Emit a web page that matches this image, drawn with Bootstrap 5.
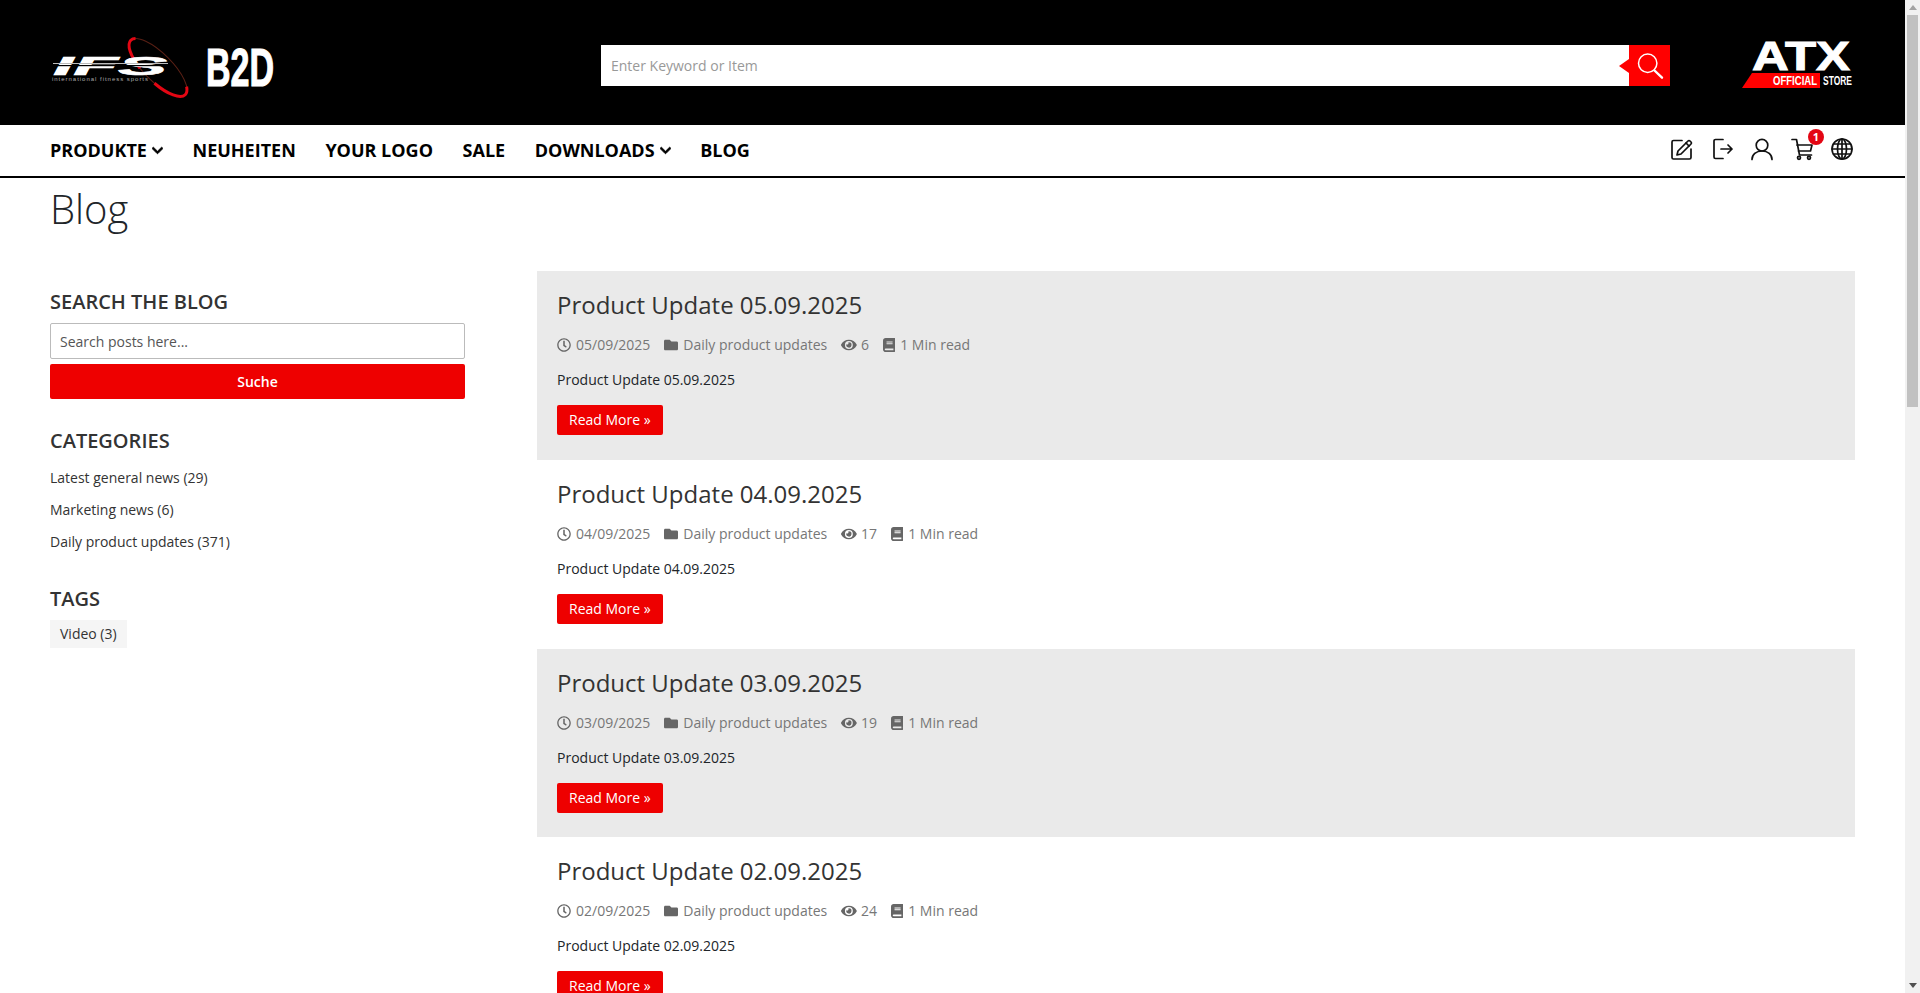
<!DOCTYPE html>
<html lang="de">
<head>
<meta charset="utf-8">
<title>Blog</title>
<link href="https://cdn.jsdelivr.net/npm/bootstrap@5.3.0/dist/css/bootstrap.min.css" rel="stylesheet">
<style>
body{font-family:"Open Sans","Noto Sans",sans-serif;font-size:14px;color:#212529;background:#fff;margin-right:15px}
.fake-bar{position:fixed;top:0;right:0;bottom:0;width:15px;background:#f1f1f1;z-index:10;padding:5px 2px;gap:5px}
.bar-up{width:0;height:0;border-style:solid;border-width:0 4px 5px;border-color:transparent transparent #a3a3a3;align-self:center;flex:none}
.bar-thumb{height:392px;background:#c1c1c1;flex:none}
.bar-down{width:0;height:0;border-style:solid;border-width:5px 4px 0;border-color:#505050 transparent transparent;align-self:center;margin-top:auto;flex:none}
.hdr-top{background:#000;height:125px;padding:0 50px}
.logo-ifs{width:224px;height:76px;flex:none}
.srch{width:1069px;height:41px;margin-left:327px;margin-top:6px;background:#fff}
.srch input{flex:1;border:0;outline:0;height:41px;padding:0 10px;font-size:14px;font-family:inherit;min-width:0}
.srch input::placeholder{color:#999}
.srch-btn{width:41px;height:41px;background:#f00;border:0;padding:0;position:relative;flex:none}
.srch-btn::before{content:"";position:absolute;left:-10px;top:13.5px;border-style:solid;border-width:7px 10px 7px 0;border-color:transparent #f00 transparent transparent}
.srch-btn svg{display:block}
.logo-atx{width:113px;height:51px;margin-left:auto;margin-right:2px;flex:none}
.hdr-nav{height:53px;border-bottom:2px solid #000;padding:0 50px}
.hdr-link{font-size:18px;font-weight:700;color:#000;text-decoration:none;text-transform:uppercase;display:flex;align-items:center;gap:5px}
.hdr-links{gap:29.6px}
.hdr-icons{gap:18px;margin-left:auto;margin-right:2px;padding-bottom:3px}
.ico{width:22px;height:22px;display:block;fill:none;stroke:#111;stroke-width:1.7;stroke-linecap:round;stroke-linejoin:round;overflow:visible}
.ico-wrap{position:relative;display:block}
.cart-badge{position:absolute;top:-9px;left:17px;width:16px;height:16px;border-radius:50%;background:#e30613;color:#fff;font-size:11px;font-weight:700;line-height:16px;text-align:center}
.page-ttl{font-size:40px;font-weight:300;line-height:48px;color:#212529;margin:7px 0 0;padding:0 50px}
.blog-wrap{padding:0 50px;margin-top:38px;gap:72px}
.side{width:415px;flex:none;padding-top:17px}
.side-h{font-size:20px;font-weight:600;color:#333;text-transform:uppercase;line-height:27px;margin:0 0 8px}
.categ-h{margin-top:28px}
.tags-h{margin-top:27px;margin-bottom:8px}
.side-input{height:36px;border-radius:2px;border:1px solid #bbb;font-size:14px;padding:0 9px;color:#555}
.side-input::placeholder{color:#555}
.side-btn{height:35px;width:100%;background:#e00;border:0;border-radius:2px;color:#fff;font-weight:600;font-size:14px;margin-top:5px;padding:0;display:block}
.side-list{list-style:none;padding:0;margin:0}
.side-list li{line-height:32px;font-size:14px;color:#333}
.tag-chip{display:inline-block;background:#f5f5f5;color:#333;font-size:14px;height:28px;line-height:28px;padding:0 10px}
.main-col{flex:1;min-width:0}
.post{padding:18px 20px 0;height:188.8px}
.post-alt{background:#eaeaea}
.post-ttl{font-size:24px;font-weight:400;line-height:32px;color:#333;margin:0 0 14px}
.post-meta{font-size:14px;color:#777;line-height:20px;gap:14px;margin-bottom:15px}
.post-meta span{display:flex;align-items:center;gap:5px}
.post-meta span:nth-child(3){gap:4px}
.post-meta svg{height:14px;fill:#666;display:block}
.post-txt{line-height:20px;color:#212529;margin:0 0 15px}
.post-btn{background:#e00;color:#fff;border:0;border-radius:2px;height:30px;line-height:30px;padding:0 12px;font-size:14px;display:inline-block;text-decoration:none}
</style>
</head>
<body>
<div class="fake-bar d-flex flex-column" aria-hidden="true"><span class="bar-up"></span><span class="bar-thumb"></span><span class="bar-down"></span></div>
<header>
<div class="hdr-top d-flex align-items-center">
<svg class="logo-ifs" viewBox="50 25 224 76">
<g transform="rotate(45 158 67.500)">
<ellipse cx="158" cy="67.500" rx="38.500" ry="14" fill="none" stroke="#5a2015" stroke-width="1"/>
<ellipse cx="158" cy="67.500" rx="38.500" ry="14" fill="none" stroke="#e30613" stroke-width="3" pathLength="100" stroke-dasharray="25 12 21 42" stroke-dashoffset="5"/>
</g>
<text x="53" y="75" font-family="Liberation Sans" font-weight="700" font-style="italic" font-size="25" fill="#fff" stroke="#fff" stroke-width=".6" textLength="114" lengthAdjust="spacingAndGlyphs">IFS</text>
<rect x="53" y="63" width="115" height="1" fill="#bbb"/>
<rect x="56" y="65" width="110" height="1.2" fill="#000"/>
<text x="52" y="81" font-family="Liberation Sans" font-size="6" fill="#aaa" textLength="96" lengthAdjust="spacing">international fitness sports</text>
<text x="206" y="85.500" font-family="Liberation Sans" font-weight="700" font-size="53" fill="#fff" stroke="#fff" stroke-width="1.200" textLength="68" lengthAdjust="spacingAndGlyphs">B2D</text>
</svg>
<div class="srch d-flex">
<input type="text" placeholder="Enter Keyword or Item">
<button class="srch-btn" type="button" aria-label="Suche"><svg width="41" height="41" viewBox="0 0 41 41" fill="none" stroke="#fff"><circle cx="18.7" cy="18.3" r="9.2" stroke-width="1.5"/><path d="M25.5 25.5l7.5 7.2" stroke-width="2.4" stroke-linecap="round"/></svg></button>
</div>
<svg class="logo-atx" viewBox="1740 37 113 51">
<text x="1752" y="70" font-family="Liberation Sans" font-weight="700" font-size="40" fill="#fff" stroke="#fff" stroke-width="1" textLength="98" lengthAdjust="spacingAndGlyphs">ATX</text>
<path d="M1752 73H1820V88H1742Z" fill="#f00"/>
<text x="1773" y="85" font-family="Liberation Sans" font-weight="700" font-size="13" fill="#fff" textLength="44" lengthAdjust="spacingAndGlyphs">OFFICIAL</text>
<text x="1823" y="85" font-family="Liberation Sans" font-weight="700" font-size="13" fill="#fff" textLength="29" lengthAdjust="spacingAndGlyphs">STORE</text>
</svg>
</div>
<nav class="hdr-nav d-flex align-items-center">
<div class="hdr-links d-flex">
<a class="hdr-link" href="#">Produkte <svg width="11" height="13" viewBox="0 0 448 512" fill="#000" stroke="#000" stroke-width="30"><path d="M207.029 381.476L12.686 187.132c-9.373-9.373-9.373-24.569 0-33.941l22.667-22.667c9.357-9.357 24.522-9.375 33.901-.04L224 284.505l154.745-154.021c9.379-9.335 24.544-9.317 33.901.04l22.667 22.667c9.373 9.373 9.373 24.569 0 33.941L240.971 381.476c-9.373 9.372-24.569 9.372-33.942 0z"/></svg></a>
<a class="hdr-link" href="#">Neuheiten</a>
<a class="hdr-link" href="#">Your Logo</a>
<a class="hdr-link" href="#">Sale</a>
<a class="hdr-link" href="#">Downloads <svg width="11" height="13" viewBox="0 0 448 512" fill="#000" stroke="#000" stroke-width="30"><path d="M207.029 381.476L12.686 187.132c-9.373-9.373-9.373-24.569 0-33.941l22.667-22.667c9.357-9.357 24.522-9.375 33.901-.04L224 284.505l154.745-154.021c9.379-9.335 24.544-9.317 33.901.04l22.667 22.667c9.373 9.373 9.373 24.569 0 33.941L240.971 381.476c-9.373 9.372-24.569 9.372-33.942 0z"/></svg></a>
<a class="hdr-link" href="#">Blog</a>
</div>
<div class="hdr-icons d-flex align-items-center">
<span class="ico-wrap"><svg class="ico" viewBox="0 0 22 22"><path d="M11 2.5H2.5A1.5 1.5 0 0 0 1 4v15.5A1.5 1.5 0 0 0 2.5 21h16a1.5 1.5 0 0 0 1.5-1.5V11"/><path d="M6 17l1-4L17 3a1.4 1.4 0 0 1 2 0l1 1a1.4 1.4 0 0 1 0 2L10 16z"/><path d="M15 5l3 3"/></svg></span>
<span class="ico-wrap"><svg class="ico" viewBox="0 0 22 22"><path d="M12 1.5H4.500A1.500 1.500 0 0 0 3 3v16a1.500 1.500 0 0 0 1.500 1.500H12"/><path d="M10 11h11M17 7l4 4-4 4"/></svg></span>
<span class="ico-wrap"><svg class="ico" viewBox="0 0 22 22"><circle cx="11" cy="7.2" r="5.8"/><path d="M1 21.500c0-5 4-8.500 10-8.500s10 3.500 10 8.500"/></svg></span>
<span class="ico-wrap"><svg class="ico" viewBox="0 0 22 22"><path d="M1 1.500h4.500l3 15.500h12"/><path d="M6 7h15l-1.500 6H7.500"/><circle cx="8" cy="19.800" r="1.500"/><circle cx="18" cy="19.800" r="1.500"/></svg><span class="cart-badge">1</span></span>
<span class="ico-wrap"><svg class="ico" viewBox="0 0 22 22"><circle cx="11" cy="11" r="10"/><ellipse cx="11" cy="11" rx="4.500" ry="10"/><path d="M11 1v20M1 11h20M2.500 6h17M2.500 16h17"/></svg></span>
</div>
</nav>
</header>
<h1 class="page-ttl">Blog</h1>
<div class="blog-wrap d-flex">
<aside class="side">
<h2 class="side-h">Search the blog</h2>
<input class="form-control side-input" type="text" placeholder="Search posts here...">
<button class="side-btn" type="button">Suche</button>
<h2 class="side-h categ-h">Categories</h2>
<ul class="side-list">
<li>Latest general news (29)</li>
<li>Marketing news (6)</li>
<li>Daily product updates (371)</li>
</ul>
<h2 class="side-h tags-h">Tags</h2>
<span class="tag-chip">Video (3)</span>
</aside>
<main class="main-col">
<article class="post post-alt">
<h3 class="post-ttl">Product Update 05.09.2025</h3>
<div class="post-meta d-flex">
<span><svg viewBox="0 0 512 512"><path d="M256 8C119 8 8 119 8 256s111 248 248 248 248-111 248-248S393 8 256 8zm0 448c-110.5 0-200-89.5-200-200S145.5 56 256 56s200 89.5 200 200-89.5 200-200 200zm61.8-104.4l-84.9-61.7c-3.1-2.3-4.9-5.9-4.9-9.7V116c0-6.6 5.4-12 12-12h32c6.6 0 12 5.4 12 12v141.7l66.8 48.6c5.4 3.9 6.5 11.4 2.6 16.8L334.6 349c-3.9 5.3-11.4 6.5-16.8 2.6z"/></svg>05/09/2025</span>
<span><svg viewBox="0 0 512 512"><path d="M464 128H272l-64-64H48C21.49 64 0 85.49 0 112v288c0 26.51 21.49 48 48 48h416c26.51 0 48-21.49 48-48V176c0-26.51-21.49-48-48-48z"/></svg>Daily product updates</span>
<span><svg viewBox="0 0 576 512"><path d="M572.52 241.4C518.29 135.59 410.93 64 288 64S57.68 135.64 3.48 241.41a32.35 32.35 0 0 0 0 29.19C57.71 376.41 165.07 448 288 448s230.32-71.64 284.52-177.41a32.35 32.35 0 0 0 0-29.19zM288 400a144 144 0 1 1 144-144 143.93 143.93 0 0 1-144 144zm0-240a95.31 95.31 0 0 0-25.31 3.79 47.85 47.85 0 0 1-66.9 66.9A95.78 95.78 0 1 0 288 160z"/></svg>6</span>
<span><svg viewBox="0 0 448 512"><path d="M448 360V24c0-13.3-10.7-24-24-24H96C43 0 0 43 0 96v320c0 53 43 96 96 96h328c13.3 0 24-10.7 24-24v-16c0-7.5-3.5-14.3-8.9-18.7-4.2-15.4-4.2-59.3 0-74.7 5.4-4.3 8.9-11.1 8.9-18.6zM128 134c0-3.3 2.7-6 6-6h212c3.3 0 6 2.7 6 6v20c0 3.3-2.7 6-6 6H134c-3.3 0-6-2.7-6-6v-20zm0 64c0-3.3 2.7-6 6-6h212c3.3 0 6 2.7 6 6v20c0 3.3-2.7 6-6 6H134c-3.3 0-6-2.7-6-6v-20zm253.4 250H96c-17.7 0-32-14.3-32-32 0-17.6 14.4-32 32-32h285.4c-1.9 17.1-1.9 46.9 0 64z"/></svg>1 Min read</span>
</div>
<p class="post-txt">Product Update 05.09.2025</p>
<a class="post-btn" href="#">Read More »</a>
</article>
<article class="post">
<h3 class="post-ttl">Product Update 04.09.2025</h3>
<div class="post-meta d-flex">
<span><svg viewBox="0 0 512 512"><path d="M256 8C119 8 8 119 8 256s111 248 248 248 248-111 248-248S393 8 256 8zm0 448c-110.5 0-200-89.5-200-200S145.5 56 256 56s200 89.5 200 200-89.5 200-200 200zm61.8-104.4l-84.9-61.7c-3.1-2.3-4.9-5.9-4.9-9.7V116c0-6.6 5.4-12 12-12h32c6.6 0 12 5.4 12 12v141.7l66.8 48.6c5.4 3.9 6.5 11.4 2.6 16.8L334.6 349c-3.9 5.3-11.4 6.5-16.8 2.6z"/></svg>04/09/2025</span>
<span><svg viewBox="0 0 512 512"><path d="M464 128H272l-64-64H48C21.49 64 0 85.49 0 112v288c0 26.51 21.49 48 48 48h416c26.51 0 48-21.49 48-48V176c0-26.51-21.49-48-48-48z"/></svg>Daily product updates</span>
<span><svg viewBox="0 0 576 512"><path d="M572.52 241.4C518.29 135.59 410.93 64 288 64S57.68 135.64 3.48 241.41a32.35 32.35 0 0 0 0 29.19C57.71 376.41 165.07 448 288 448s230.32-71.64 284.52-177.41a32.35 32.35 0 0 0 0-29.19zM288 400a144 144 0 1 1 144-144 143.93 143.93 0 0 1-144 144zm0-240a95.31 95.31 0 0 0-25.31 3.79 47.85 47.85 0 0 1-66.9 66.9A95.78 95.78 0 1 0 288 160z"/></svg>17</span>
<span><svg viewBox="0 0 448 512"><path d="M448 360V24c0-13.3-10.7-24-24-24H96C43 0 0 43 0 96v320c0 53 43 96 96 96h328c13.3 0 24-10.7 24-24v-16c0-7.5-3.5-14.3-8.9-18.7-4.2-15.4-4.2-59.3 0-74.7 5.4-4.3 8.9-11.1 8.9-18.6zM128 134c0-3.3 2.7-6 6-6h212c3.3 0 6 2.7 6 6v20c0 3.3-2.7 6-6 6H134c-3.3 0-6-2.7-6-6v-20zm0 64c0-3.3 2.7-6 6-6h212c3.3 0 6 2.7 6 6v20c0 3.3-2.7 6-6 6H134c-3.3 0-6-2.7-6-6v-20zm253.4 250H96c-17.7 0-32-14.3-32-32 0-17.6 14.4-32 32-32h285.4c-1.9 17.1-1.9 46.9 0 64z"/></svg>1 Min read</span>
</div>
<p class="post-txt">Product Update 04.09.2025</p>
<a class="post-btn" href="#">Read More »</a>
</article>
<article class="post post-alt">
<h3 class="post-ttl">Product Update 03.09.2025</h3>
<div class="post-meta d-flex">
<span><svg viewBox="0 0 512 512"><path d="M256 8C119 8 8 119 8 256s111 248 248 248 248-111 248-248S393 8 256 8zm0 448c-110.5 0-200-89.5-200-200S145.5 56 256 56s200 89.5 200 200-89.5 200-200 200zm61.8-104.4l-84.9-61.7c-3.1-2.3-4.9-5.9-4.9-9.7V116c0-6.6 5.4-12 12-12h32c6.6 0 12 5.4 12 12v141.7l66.8 48.6c5.4 3.9 6.5 11.4 2.6 16.8L334.6 349c-3.9 5.3-11.4 6.5-16.8 2.6z"/></svg>03/09/2025</span>
<span><svg viewBox="0 0 512 512"><path d="M464 128H272l-64-64H48C21.49 64 0 85.49 0 112v288c0 26.51 21.49 48 48 48h416c26.51 0 48-21.49 48-48V176c0-26.51-21.49-48-48-48z"/></svg>Daily product updates</span>
<span><svg viewBox="0 0 576 512"><path d="M572.52 241.4C518.29 135.59 410.93 64 288 64S57.68 135.64 3.48 241.41a32.35 32.35 0 0 0 0 29.19C57.71 376.41 165.07 448 288 448s230.32-71.64 284.52-177.41a32.35 32.35 0 0 0 0-29.19zM288 400a144 144 0 1 1 144-144 143.93 143.93 0 0 1-144 144zm0-240a95.31 95.31 0 0 0-25.31 3.79 47.85 47.85 0 0 1-66.9 66.9A95.78 95.78 0 1 0 288 160z"/></svg>19</span>
<span><svg viewBox="0 0 448 512"><path d="M448 360V24c0-13.3-10.7-24-24-24H96C43 0 0 43 0 96v320c0 53 43 96 96 96h328c13.3 0 24-10.7 24-24v-16c0-7.5-3.5-14.3-8.9-18.7-4.2-15.4-4.2-59.3 0-74.7 5.4-4.3 8.9-11.1 8.9-18.6zM128 134c0-3.3 2.7-6 6-6h212c3.3 0 6 2.7 6 6v20c0 3.3-2.7 6-6 6H134c-3.3 0-6-2.7-6-6v-20zm0 64c0-3.3 2.7-6 6-6h212c3.3 0 6 2.7 6 6v20c0 3.3-2.7 6-6 6H134c-3.3 0-6-2.7-6-6v-20zm253.4 250H96c-17.7 0-32-14.3-32-32 0-17.6 14.4-32 32-32h285.4c-1.9 17.1-1.9 46.9 0 64z"/></svg>1 Min read</span>
</div>
<p class="post-txt">Product Update 03.09.2025</p>
<a class="post-btn" href="#">Read More »</a>
</article>
<article class="post">
<h3 class="post-ttl">Product Update 02.09.2025</h3>
<div class="post-meta d-flex">
<span><svg viewBox="0 0 512 512"><path d="M256 8C119 8 8 119 8 256s111 248 248 248 248-111 248-248S393 8 256 8zm0 448c-110.5 0-200-89.5-200-200S145.5 56 256 56s200 89.5 200 200-89.5 200-200 200zm61.8-104.4l-84.9-61.7c-3.1-2.3-4.9-5.9-4.9-9.7V116c0-6.6 5.4-12 12-12h32c6.6 0 12 5.4 12 12v141.7l66.8 48.6c5.4 3.9 6.5 11.4 2.6 16.8L334.6 349c-3.9 5.3-11.4 6.5-16.8 2.6z"/></svg>02/09/2025</span>
<span><svg viewBox="0 0 512 512"><path d="M464 128H272l-64-64H48C21.49 64 0 85.49 0 112v288c0 26.51 21.49 48 48 48h416c26.51 0 48-21.49 48-48V176c0-26.51-21.49-48-48-48z"/></svg>Daily product updates</span>
<span><svg viewBox="0 0 576 512"><path d="M572.52 241.4C518.29 135.59 410.93 64 288 64S57.68 135.64 3.48 241.41a32.35 32.35 0 0 0 0 29.19C57.71 376.41 165.07 448 288 448s230.32-71.64 284.52-177.41a32.35 32.35 0 0 0 0-29.19zM288 400a144 144 0 1 1 144-144 143.93 143.93 0 0 1-144 144zm0-240a95.31 95.31 0 0 0-25.31 3.79 47.85 47.85 0 0 1-66.9 66.9A95.78 95.78 0 1 0 288 160z"/></svg>24</span>
<span><svg viewBox="0 0 448 512"><path d="M448 360V24c0-13.3-10.7-24-24-24H96C43 0 0 43 0 96v320c0 53 43 96 96 96h328c13.3 0 24-10.7 24-24v-16c0-7.5-3.5-14.3-8.9-18.7-4.2-15.4-4.2-59.3 0-74.7 5.4-4.3 8.9-11.1 8.9-18.6zM128 134c0-3.3 2.7-6 6-6h212c3.3 0 6 2.7 6 6v20c0 3.3-2.7 6-6 6H134c-3.3 0-6-2.7-6-6v-20zm0 64c0-3.3 2.7-6 6-6h212c3.3 0 6 2.7 6 6v20c0 3.3-2.7 6-6 6H134c-3.3 0-6-2.7-6-6v-20zm253.4 250H96c-17.7 0-32-14.3-32-32 0-17.6 14.4-32 32-32h285.4c-1.9 17.1-1.9 46.9 0 64z"/></svg>1 Min read</span>
</div>
<p class="post-txt">Product Update 02.09.2025</p>
<a class="post-btn" href="#">Read More »</a>
</article>
</main>
</div>
<script src="https://cdn.jsdelivr.net/npm/bootstrap@5.3.0/dist/js/bootstrap.bundle.min.js"></script>
</body>
</html>
